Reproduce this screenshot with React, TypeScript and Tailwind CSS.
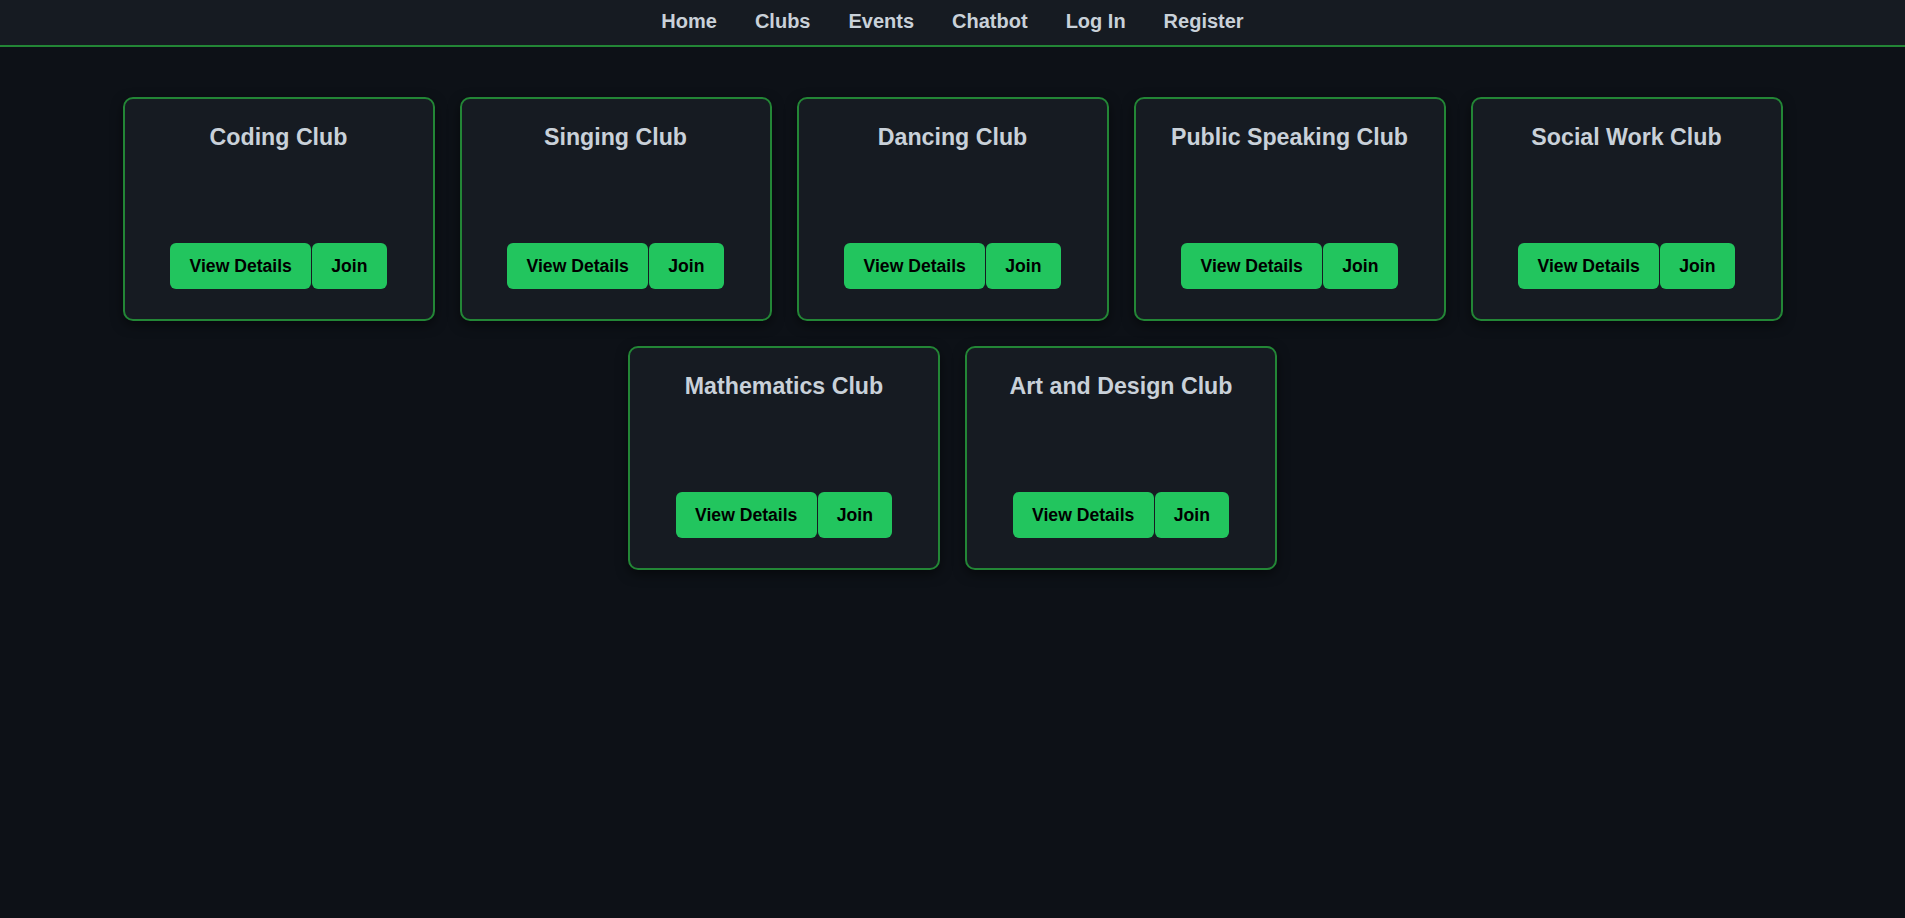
const NAV_LINKS = ["Home", "Clubs", "Events", "Chatbot", "Log In", "Register"]

const CLUBS = [
    "Coding Club",
    "Singing Club",
    "Dancing Club",
    "Public Speaking Club",
    "Social Work Club",
    "Mathematics Club",
    "Art and Design Club",
]

function ClubCard({ name }: { name: string }) {
    return (
        <div className="w-[312px] h-[224px] box-border flex flex-col items-center pt-[25px] border-2 border-[#238636] rounded-[10px] bg-[#161b22] shadow-[0_4px_12px_rgba(0,0,0,0.5)]">
            <h3 className="text-[23.2px] leading-[27px] font-bold text-[#c9d1d9]">{name}</h3>
            <div className="mt-[92px] flex gap-[1px]">
                <button className="px-[19.2px] py-[12.8px] text-[17.6px] leading-[20px] font-bold text-black bg-[#22c55e] rounded-[6px]">
                    View Details
                </button>
                <button className="px-[19.2px] py-[12.8px] text-[17.6px] leading-[20px] font-bold text-black bg-[#22c55e] rounded-[6px]">
                    Join
                </button>
            </div>
        </div>
    )
}

export default function App() {
    return (
        <div className="min-h-screen bg-[#0d1117] font-['Liberation_Sans',Arial,sans-serif]">
            {/* Navbar */}
            <nav className="bg-[#161b22] border-b-2 border-[#238636] flex justify-center gap-[38px] pt-[10px] pb-[12px]">
                {NAV_LINKS.map((link) => (
                    <a key={link} href="#" className="text-[20px] leading-[23px] font-bold text-[#c9d1d9]">
                        {link}
                    </a>
                ))}
            </nav>

            {/* Clubs */}
            <div className="pt-[50px] flex flex-wrap justify-center gap-[25px]">
                {CLUBS.map((club) => (
                    <ClubCard key={club} name={club} />
                ))}
            </div>
        </div>
    )
}
